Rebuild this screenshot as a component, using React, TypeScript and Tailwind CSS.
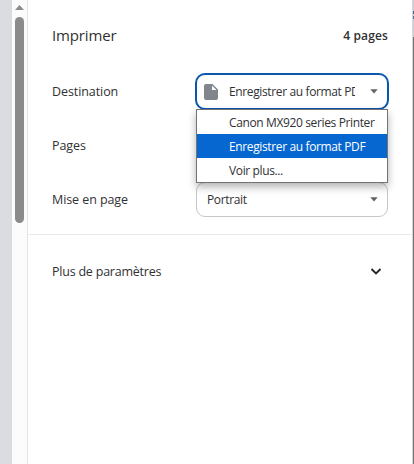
import type { ReactNode } from "react";

const printers = ["Canon MX920 series Printer", "Enregistrer au format PDF", "Voir plus..."];

function Caret() {
  return (
    <svg className="h-[5px] w-2 shrink-0" viewBox="0 0 8 5">
      <path d="M.3.3h7.4L4 4.5z" fill="#5f6368" />
    </svg>
  );
}

function Row({ label, children }: { label: string; children?: ReactNode }) {
  return (
    <div className="flex h-[54px] items-center pl-6 pr-6">
      <span className="w-36 pt-0.5 text-[12.5px] tracking-[-0.08px]">{label}</span>
      {children}
    </div>
  );
}

export default function App() {
  return (
    <div className="flex h-[464px] w-[414px] overflow-hidden bg-white font-['Open_Sans','Noto_Sans',sans-serif] text-[12px] leading-4 tracking-[-0.37px] text-[#303133]">
      <div className="w-3 shrink-0 bg-[#dadce0]" />
      <div className="flex w-[15px] shrink-0 flex-col items-center bg-[#fcfcfc] pt-[5px]">
        <svg className="h-[5px] w-[9px]" viewBox="0 0 9 5">
          <path d="M4.5 0 9 5H0z" fill="#8b8b8b" />
        </svg>
        <div className="mt-[7px] h-[206px] w-[9px] rounded-full bg-[#8b8b8b]" />
      </div>
      <main className="min-w-0 flex-1 border-l border-[#e3e4e6]">
        <header className="flex h-16 items-center justify-between pl-6 pr-6 pt-[6px]">
          <h1 className="text-[15px] tracking-[-0.15px]">Imprimer</h1>
          <span className="pt-0.5 font-semibold tracking-[0.15px]">4 pages</span>
        </header>
        <Row label="Destination">
          <div className="relative h-9 w-48">
            <div className="-ml-px flex h-[37px] w-[194px] items-center rounded-[10px] border-2 border-[#0b57b0] pl-[7px] pr-[9px]">
              <svg className="h-4 w-[14px] shrink-0" viewBox="0 0 14 16">
                <path d="M2 0h6.5L14 5.5V14a2 2 0 0 1-2 2H2a2 2 0 0 1-2-2V2C0 .9.9 0 2 0zm6 1.5V6h4.5z" fill="#80868b" fillRule="evenodd" />
              </svg>
              <div className="ml-[11px] w-[126px] overflow-hidden whitespace-nowrap">Enregistrer au format PDF</div>
              <div className="ml-auto"><Caret /></div>
            </div>
            <div className="absolute left-0 top-[36px] z-10 w-48 border border-[#737373] bg-white shadow-[0_4px_8px_rgba(0,0,0,0.3)]">
              {printers.map((name, index) => (
                <div
                  key={name}
                  className={`flex h-6 items-center whitespace-nowrap pl-8 pt-0.5 ${index === 1 ? "bg-[#0667d0] text-white" : "text-[#303133]"}`}
                >
                  {name}
                </div>
              ))}
            </div>
          </div>
        </Row>
        <Row label="Pages" />
        <Row label="Mise en page">
          <div className="flex h-[35px] w-48 items-center justify-between rounded-[9px] border border-[#c7c7c7] pl-[10px] pr-[9px]">
            <span className="pt-0.5">Portrait</span>
            <Caret />
          </div>
        </Row>
        <div className="mt-2 flex h-[74px] items-center justify-between border-t border-[#e8eaed] pl-6 pr-[30px]">
          <span className="text-[12.5px] tracking-[-0.22px]">Plus de paramètres</span>
          <svg className="h-[7px] w-3" viewBox="0 0 12 7" fill="none">
            <path d="m1.5 1 4.5 4.5L10.5 1" stroke="#252525" strokeWidth="1.9" />
          </svg>
        </div>
      </main>
      <div className="w-px shrink-0 bg-[#d8d8d8]" />
      <div className="w-px shrink-0 bg-[#707070]">
        <div className="h-[37px] bg-[#c9ccd2] pt-[11px]">
          <div className="h-[3px] bg-[#3e5e91]" />
          <div className="mt-[2px] h-[3px] bg-[#526da0]" />
        </div>
      </div>
    </div>
  );
}
